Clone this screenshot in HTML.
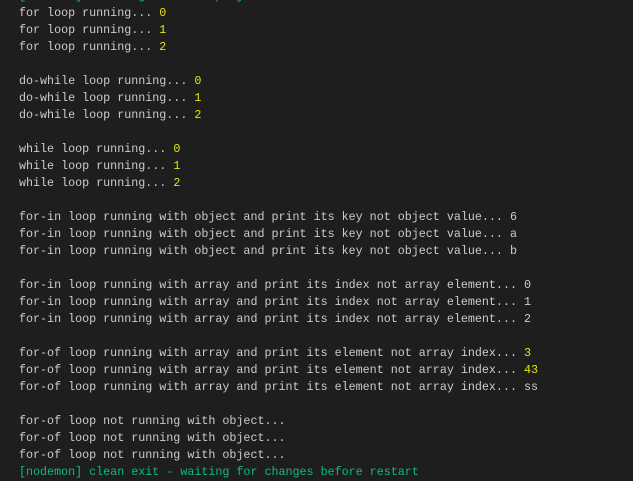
<!DOCTYPE html>
<html><head><style>
html,body{margin:0;padding:0;background:#1e1e1e;width:633px;height:468px;overflow:hidden}
pre{margin:0;position:absolute;left:19px;top:-12px;font-family:"Liberation Mono",monospace;font-size:11.7px;line-height:17px;color:#cccccc}
.y{color:#e5e510}.g{color:#0dbc79}
</style></head><body><pre><span class="g">[nodemon] starting `node loops.js`</span>
for loop running... <span class="y">0</span>
for loop running... <span class="y">1</span>
for loop running... <span class="y">2</span>

do-while loop running... <span class="y">0</span>
do-while loop running... <span class="y">1</span>
do-while loop running... <span class="y">2</span>

while loop running... <span class="y">0</span>
while loop running... <span class="y">1</span>
while loop running... <span class="y">2</span>

for-in loop running with object and print its key not object value... 6
for-in loop running with object and print its key not object value... a
for-in loop running with object and print its key not object value... b

for-in loop running with array and print its index not array element... 0
for-in loop running with array and print its index not array element... 1
for-in loop running with array and print its index not array element... 2

for-of loop running with array and print its element not array index... <span class="y">3</span>
for-of loop running with array and print its element not array index... <span class="y">43</span>
for-of loop running with array and print its element not array index... ss

for-of loop not running with object...
for-of loop not running with object...
for-of loop not running with object...
<span class="g">[nodemon] clean exit - waiting for changes before restart</span></pre></body></html>
